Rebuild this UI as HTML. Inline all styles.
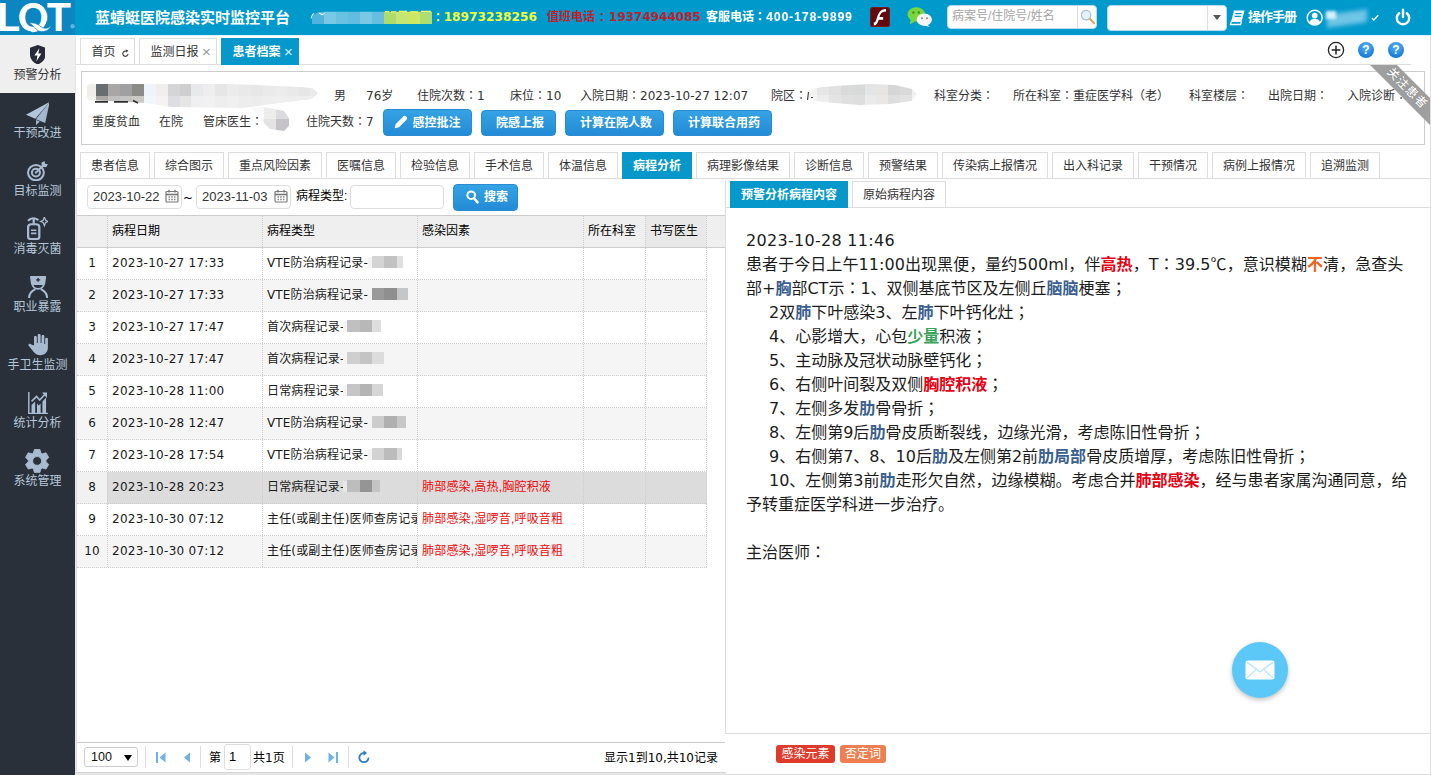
<!DOCTYPE html>
<html>
<head>
<meta charset="utf-8">
<title>蓝蜻蜓医院感染实时监控平台</title>
<style>
*{box-sizing:border-box;margin:0;padding:0}
html,body{width:1431px;height:775px;overflow:hidden;background:#fff}
body{position:relative;font-family:"DejaVu Sans","Liberation Sans","Noto Sans CJK SC",sans-serif;font-size:13px;color:#333}
.abs{position:absolute}
.cjk{font-family:"Liberation Sans","Noto Sans CJK SC",sans-serif}
.dj{font-family:"DejaVu Sans","Liberation Sans",sans-serif}
.fw{font-family:"Noto Sans CJK JP","Noto Sans CJK SC",sans-serif;line-height:0}
#txt b,#txt .cjk{line-height:0}
/* header */
#hdr{position:absolute;left:0;top:0;width:1431px;height:35px;background:#0099cc;color:#fff}
#logo{position:absolute;left:0;top:0;width:75px;height:35px;background:#0b86c0;overflow:hidden}
.ht{position:absolute;top:0;height:35px;line-height:34px;white-space:nowrap;font-weight:bold}
/* sidebar */
#side{position:absolute;left:0;top:35px;width:75px;height:740px;background:#2a3039}
.sit{position:absolute;left:0;width:75px;height:58px;text-align:center;color:#b4c7da;font-size:12px}
.sit.on{background:#efefef;color:#333}
.sit svg{position:absolute}
.sit b{position:absolute;left:0;width:75px;top:31px;line-height:18px;font-weight:normal;font-family:"Liberation Sans","Noto Sans CJK SC",sans-serif}
/* tabs */
.tab{position:absolute;height:26px;border:1px solid #ddd;border-bottom:0;background:#fff;color:#333;font-size:12px;line-height:27px;text-align:center;white-space:nowrap;font-family:"Liberation Sans","Noto Sans CJK SC",sans-serif;overflow:hidden}
.tab.on{background:#0698cb;border-color:#0698cb;color:#fff;font-weight:bold;height:27px}
.hl{position:absolute;height:1px;background:#ddd}
.pt{position:absolute;white-space:nowrap;font-size:12px;line-height:18px;color:#333}
.btn{position:absolute;height:27px;border-radius:4px;background:linear-gradient(#34a3e4,#248bd6);border:1px solid #2a8ad2;color:#fff;font-weight:bold;font-size:12px;line-height:26px;text-align:center;white-space:nowrap;padding-left:3px;font-family:"Liberation Sans","Noto Sans CJK SC",sans-serif}
.blur{position:absolute;filter:blur(2px)}
/* grid */
.gh{position:absolute;top:216px;height:31px;background:#efefef;font-size:12px;line-height:31px;white-space:nowrap;color:#000}
.row{position:absolute;left:77px;width:630px;height:32px;font-size:12px;line-height:31px;color:#1a1a1a}
.row.alt{background:#f5f5f5}
.row.sel{background:#dcdcdc}
.row span{position:absolute;top:0;white-space:nowrap;overflow:hidden;height:32px}
.row .n{left:0;width:30px;text-align:center}
.row .d{left:35px;letter-spacing:.27px}
.row .t{left:190px;width:150px;letter-spacing:.15px}
.row .f{left:345px;color:#f00a0a;letter-spacing:.2px;font-family:"Liberation Sans","Noto Sans CJK SC",sans-serif}
.dv{position:absolute;width:0;border-left:1px dotted #ccc}
.dh{position:absolute;height:0;border-top:1px dotted #ccc}
/* right content */
#txt{position:absolute;left:746px;top:229px;width:670px;font-size:16px;line-height:24px;color:#1c1c1c;white-space:nowrap}
#txt b.r{color:#e60012}#txt b.b{color:#3b5f8f}#txt b.g{color:#3aa35b}#txt b.o{color:#f0641e}
#txt b{font-family:"Liberation Sans","Noto Sans CJK SC",sans-serif}
.lab{position:absolute;top:745px;height:18px;border-radius:3px;color:#fff;font-size:12px;line-height:19px;text-align:center;font-family:"Liberation Sans","Noto Sans CJK SC",sans-serif}
#txt .ln{height:24px;line-height:24px;white-space:nowrap}
#txt .in{padding-left:23px}
#t1{letter-spacing:.3px}
#t2{letter-spacing:.07px}
</style>
</head>
<body>
<!-- HEADER -->
<div id="hdr">
  <div id="logo"><svg class="abs" style="left:0;top:0" width="75" height="35" viewBox="0 0 75 35"><clipPath id="qc"><rect x="0" y="0" width="19.3" height="35"/><ellipse cx="33.1" cy="17.3" rx="14.1" ry="14.9"/><rect x="47.4" y="0" width="28" height="35"/></clipPath><g clip-path="url(#qc)"><text x="-3 17.6 46.3" y="31.2" font-family="Liberation Sans, sans-serif" font-weight="bold" font-size="40.4" fill="#fff">LQT</text></g><path d="M28.6 23.2 C33 23.2 35 31.6 41.5 31.6 C46.5 31.6 49.8 29 51.2 25.4 C48 28.6 45 28.8 42.5 27.6 C39 26 36 21.6 28.6 23.2 Z" fill="#fff" stroke="#0b86c0" stroke-width="0.7"/><circle cx="72.6" cy="26.2" r="2.2" fill="#5fb4e2"/></svg></div>
  <div class="ht cjk" id="h_title" style="left:95px;font-size:15px;line-height:35px">蓝蜻蜓医院感染实时监控平台</div>
  <svg class="abs" style="left:308px;top:9px" width="126" height="17" viewBox="308 9 126 17"><clipPath id="mz0"><path d="M312 17 Q314 12.4 322 11.8 L432 11.8 L432 24 L312 24 Z"/></clipPath><g clip-path="url(#mz0)" shape-rendering="crispEdges"><rect x="311.8" y="11" width="12.1" height="13.2" fill="#4fb4dc"/><rect x="323.8" y="11" width="12.1" height="13.2" fill="#79c8e6"/><rect x="335.9" y="11" width="12.1" height="13.2" fill="#6bc1e2"/><rect x="347.9" y="11" width="12.1" height="13.2" fill="#62bde0"/><rect x="359.9" y="11" width="12.1" height="13.2" fill="#78c8e6"/><rect x="371.9" y="11" width="12.1" height="13.2" fill="#66bfe1"/><rect x="384.0" y="11" width="12.1" height="13.2" fill="#aedc6a"/><rect x="396.0" y="11" width="12.1" height="13.2" fill="#c6e674"/><rect x="408.0" y="11" width="12.1" height="13.2" fill="#cce765"/><rect x="420.1" y="11" width="12.1" height="13.2" fill="#aedd70"/></g><path d="M311 18.5 Q311.6 15.5 313.6 13.4 M319 13 L322 14.6 L324.5 13.6" stroke="#eaf7fd" stroke-width="1.1" fill="none"/><path d="M385 11.6 H389 M391 11.8 H396 M399 11.4 H407 M410 11.8 H418 M421 11.4 H431" stroke="#eef76a" stroke-width="1.2"/></svg>
  <div class="ht cjk" id="h_y" style="left:434px;font-size:12px;color:#f1ff38"><span class="fw" style="position:relative;left:-2px;top:1px">：</span><span class="dj" style="line-height:0;margin-left:-2.4px;font-size:12.2px">18973238256</span></div>
  <div class="ht cjk" id="h_r" style="left:547px;font-size:12px;color:#c21f2b">值班电话<span class="fw" style="margin-left:3px;position:relative;left:-2px;top:1px">：</span><span class="dj" style="line-height:0;margin-left:-1px">19374944085</span></div>
  <div class="ht cjk" id="h_w" style="left:706px;font-size:12px;color:#fff">客服电话<span class="fw">：</span><span style="letter-spacing:1px">400-178-9899</span></div>
  <svg class="abs" style="left:870px;top:7px" width="20" height="20" viewBox="0 0 21 21"><rect x="0" y="0" width="21" height="21" rx="3" fill="#7a1a1c"/><rect x="1" y="1" width="19" height="19" rx="2" fill="#620a0e"/><path d="M16.4 3.2 C11.4 3.2 10.4 6.4 9.6 8.8 L13.4 8.8 L13.4 11.8 L8.8 11.8 C7.8 14.8 6.8 17.6 3.6 17.8 L3.6 14.8 C5.4 14.6 5.8 12.8 6.6 10.4 C7.8 6.8 9.4 0.4 16.4 0.4 Z" fill="#fff" transform="translate(0.4,1.6)"/></svg>
  <svg class="abs" style="left:906.5px;top:7px" width="25.5" height="20" viewBox="0 0 28 22"><ellipse cx="10.2" cy="8.2" rx="9.6" ry="8" fill="#7ad63f"/><path d="M4 14 L3 19 L9 16 Z" fill="#7ad63f"/><circle cx="7" cy="6" r="1.3" fill="#3d8f1a"/><circle cx="13" cy="6" r="1.3" fill="#3d8f1a"/><ellipse cx="19" cy="14" rx="8.4" ry="6.8" fill="#f4f4f4"/><path d="M22 19 L25 22 L19 20.3 Z" fill="#f4f4f4"/><circle cx="16.4" cy="12.4" r="1.1" fill="#8a8a8a"/><circle cx="22" cy="12.4" r="1.1" fill="#8a8a8a"/></svg>
  <div class="abs" style="left:947px;top:5px;width:150px;height:24px;background:#fff;border-radius:4px;border:1px solid #b8dcee"></div>
  <div class="abs cjk" style="left:952px;top:5px;height:24px;line-height:23px;font-size:12px;color:#a5a5a5;white-space:nowrap">病案号/住院号/姓名</div>
  <div class="abs" style="left:1077px;top:6px;width:1px;height:22px;background:#ddd"></div>
  <svg class="abs" style="left:1080px;top:9px" width="16" height="16" viewBox="0 0 17 17"><circle cx="6.5" cy="6.5" r="5" fill="#e3f2fb" stroke="#a3c3da" stroke-width="1.3"/><path d="M10.5 10.5 L15 15" stroke="#dcae66" stroke-width="2.3" stroke-linecap="round"/></svg>
  <div class="abs" style="left:1107px;top:5px;width:120px;height:26px;background:#fff;border-radius:4px;border:1px solid #b8dcee"></div>
  <div class="abs" style="left:1207px;top:6px;width:1px;height:24px;background:#ddd"></div>
  <div class="abs" style="left:1212.5px;top:15px;width:0;height:0;border:4.5px solid transparent;border-top:5px solid #555;border-bottom:0"></div>
  <svg class="abs" style="left:1229px;top:9px" width="17" height="17" viewBox="0 0 17 17"><path d="M5 1.5 L15.5 1.5 L12.5 13 L2 13 Z" fill="#fff"/><path d="M2 13 L1.5 15.5 L11.5 15.5 L12.5 13" fill="none" stroke="#fff" stroke-width="1.3"/><path d="M6.3 4.6 L12.6 4.6 M5.6 7.3 L11.9 7.3" stroke="#0099cc" stroke-width="1.2"/></svg>
  <div class="ht cjk" id="h_m" style="left:1248px;font-size:13px;letter-spacing:-1px">操作手册</div>
  <svg class="abs" style="left:1306px;top:8.6px" width="17.4" height="17.4" viewBox="0 0 20 20"><circle cx="10" cy="10" r="8.6" fill="none" stroke="#fff" stroke-width="1.6"/><circle cx="10" cy="7.6" r="3.3" fill="#fff"/><path d="M3.8 16 C4.5 12.2 7 11.6 10 11.6 C13 11.6 15.5 12.2 16.2 16 C13 19 7 19 3.8 16 Z" fill="#fff"/></svg>
  <div class="blur" style="left:1327px;top:12px;width:40px;height:13px;background:#6fc5e5;filter:blur(2px);transform:skewY(-8deg)"></div><div class="blur" style="left:1326px;top:11px;width:10px;height:8px;background:#d8f0fa;filter:blur(1.5px)"></div>
  <svg class="abs" style="left:1370.5px;top:14px" width="8" height="7.2" viewBox="0 0 10 9"><path d="M1 5 L3.5 7.5 L9 1.5" fill="none" stroke="#fff" stroke-width="1.6"/></svg>
  <svg class="abs" style="left:1394px;top:8px" width="18" height="19" viewBox="0 0 18 19"><path d="M5.2 5.2 A6.2 6.2 0 1 0 12.8 5.2" fill="none" stroke="#fff" stroke-width="2.4" stroke-linecap="round"/><path d="M9 1.8 L9 9" stroke="#fff" stroke-width="2.4" stroke-linecap="round"/></svg>
</div>
<!-- SIDEBAR -->
<div id="side">
  <div class="sit on" style="top:0px"><svg viewBox="3 1.5 18 21.5" preserveAspectRatio="none" style="left:29.6px;top:9.7px;width:15.6px;height:19.5px"><path d="M12 1.5 L21 4.5 V12 C21 17.5 16.5 21.5 12 23 C7.5 21.5 3 17.5 3 12 V4.5 Z" fill="#272b38"/><path d="M13.8 5 L8 13 H11.6 L10.4 19.4 L16.2 10.8 H12.6 Z" fill="#fff"/></svg><b>预警分析</b></div>
  <div class="sit" style="top:58px"><svg viewBox="0 0 158 155" preserveAspectRatio="none" style="left:25.7px;top:8.7px;width:23.7px;height:23.2px"><path d="M158 0 L0 85 L62 112 Z" fill="#b3c5d9"/><path d="M158 0 L66 116 L128 141 Z" fill="#a3b6cd"/><path d="M67 121 L67 155 L92 131 Z" fill="#a3b6cd"/></svg><b>干预改进</b></div>
  <div class="sit" style="top:116px"><svg viewBox="0.8 0.5 22.7 22.7" preserveAspectRatio="none" style="left:27.0px;top:9.7px;width:20.9px;height:20.3px"><circle cx="10.5" cy="13.5" r="8.6" fill="none" stroke="#a9bbd1" stroke-width="2.2"/><circle cx="10.5" cy="13.5" r="4.4" fill="none" stroke="#a9bbd1" stroke-width="2.2"/><circle cx="10.5" cy="13.5" r="1.3" fill="#a9bbd1"/><path d="M10.5 13.5 L19 5" stroke="#a9bbd1" stroke-width="2.2"/><path d="M16.4 2.4 L17 7 L21.6 7.6 L23.5 4.2 L20.5 3.5 L19.8 0.5 Z" fill="#a9bbd1"/></svg><b>目标监测</b></div>
  <div class="sit" style="top:174px"><svg viewBox="5 1 19 22.6" preserveAspectRatio="none" style="left:26.6px;top:7.9px;width:21.3px;height:23.1px"><path d="M6 11 C6 9 7.5 8 9 8 H13 C14.5 8 16 9 16 11 V20 C16 21.6 15 22.6 13.5 22.6 H8.5 C7 22.6 6 21.6 6 20 Z" fill="none" stroke="#a9bbd1" stroke-width="2"/><path d="M11 8 V3.2 M6.5 4.2 C8.5 1.8 12 1.6 14.5 3.6" fill="none" stroke="#a9bbd1" stroke-width="2" stroke-linecap="round"/><path d="M8.6 14 H13.4 M8.6 17 H13.4" stroke="#a9bbd1" stroke-width="1.6"/><path d="M20.5 1 L21.6 4.2 L24 5.3 L21.6 6.4 L20.5 9.6 L19.4 6.4 L17 5.3 L19.4 4.2 Z" fill="none" stroke="#a9bbd1" stroke-width="1.1"/></svg><b>消毒灭菌</b></div>
  <div class="sit" style="top:232px"><svg viewBox="2 0.5 20 23.5" preserveAspectRatio="none" style="left:27.7px;top:8.7px;width:20.2px;height:22.0px"><path d="M5 1.5 H19 L18 9 H6 Z" fill="#a9bbd1" stroke="#a9bbd1" stroke-width="2" stroke-linejoin="round"/><path d="M12 2.6 V6.6 M10 4.6 H14" stroke="#2a3039" stroke-width="1.4"/><path d="M6.5 9 C6.5 16 17.5 16 17.5 9 Z" fill="#2a3039" stroke="#a9bbd1" stroke-width="2"/><path d="M3 24 C3.3 18.5 6.3 16 9.3 14.6 M14.7 14.6 C17.7 16 20.7 18.5 21 24" fill="none" stroke="#a9bbd1" stroke-width="2"/></svg><b>职业暴露</b></div>
  <div class="sit" style="top:290px"><svg viewBox="2 1.4 17.2 21.6" preserveAspectRatio="none" style="left:27.7px;top:9.4px;width:19.9px;height:21.2px"><path d="M7.2 13 V4.6 C7.2 3 9.6 3 9.6 4.6 V10.5 H10.4 V2.6 C10.4 1 12.9 1 12.9 2.6 V10.5 H13.7 V3.6 C13.7 2 16.1 2 16.1 3.6 V11.5 H16.9 V6.4 C16.9 4.8 19.2 4.8 19.2 6.4 V15.5 C19.2 20 16.5 23 12.8 23 C9.8 23 8.2 21.6 6.6 19.2 L2.6 13.4 C1.6 11.8 3.6 10.6 4.8 12 Z" fill="#a9bbd1"/></svg><b>手卫生监测</b></div>
  <div class="sit" style="top:348px"><svg viewBox="1.1 1 21.9 22.4" preserveAspectRatio="none" style="left:27.7px;top:9.0px;width:19.9px;height:22.4px"><path d="M2 1 V22.5 H23" fill="none" stroke="#a9bbd1" stroke-width="1.6"/><path d="M5 22 V14 L9 10.5 V22 Z M11 22 V12.5 L13 14.5 L15 12.5 V22 Z M17 22 V10.5 L21 6.5 V22 Z" fill="#a9bbd1"/><path d="M5 10.5 L10.5 5.5 L14 9 L20 3" fill="none" stroke="#a9bbd1" stroke-width="1.7"/><path d="M16.5 1.6 H22 V7.1 Z" fill="#a9bbd1"/></svg><b>统计分析</b></div>
  <div class="sit" style="top:406px"><svg viewBox="0 0.8 24 24" preserveAspectRatio="none" style="left:25.4px;top:7.9px;width:24.3px;height:23.9px"><path fill-rule="evenodd" stroke="#a9bbd1" stroke-width="0.8" stroke-linejoin="round" d="M8.28 4.82 L9.30 1.11 L14.70 1.11 L15.72 4.82 L17.05 5.59 L20.78 4.62 L23.48 9.29 L20.77 12.03 L20.77 13.57 L23.48 16.31 L20.78 20.98 L17.05 20.01 L15.72 20.78 L14.70 24.49 L9.30 24.49 L8.28 20.78 L6.95 20.01 L3.22 20.98 L0.52 16.31 L3.23 13.57 L3.23 12.03 L0.52 9.29 L3.22 4.62 L6.95 5.59 Z M12 8.4 A4.4 4.4 0 1 0 12 17.2 A4.4 4.4 0 1 0 12 8.4 Z" fill="#a9bbd1"/></svg><b>系统管理</b></div>
</div>
<div class="abs" style="left:75px;top:36px;width:1px;height:739px;background:#e6e6e6"></div>
<div class="abs" style="left:76px;top:178px;width:1px;height:597px;background:#ddd"></div>
<div class="abs" style="left:0;top:35px;width:1431px;height:1px;background:#e3f6ff"></div>
<div class="abs" style="left:1430px;top:36px;width:1px;height:739px;background:#ddd"></div>
<!-- MAIN -->
<div id="main">
<div class="hl" style="left:76px;top:64px;width:1335px"></div>
<div class="tab" style="left:80px;top:38px;width:55px;text-align:left;padding-left:10.5px">首页<svg style="margin-left:6px;vertical-align:-1px" width="7" height="8" viewBox="0 0 7 8"><path d="M6 5 A2.6 2.6 0 1 1 4.2 2.2" fill="none" stroke="#444" stroke-width="1.2"/><path d="M3.6 0.2 L6.4 1.6 L4.4 3.8 Z" fill="#444"/></svg></div>
<div class="tab" style="left:139px;top:38px;width:78px;text-align:left;padding-left:10.5px">监测日报<span style="color:#999;margin-left:3.5px;font-size:15px;line-height:0;position:relative;top:1px">×</span></div>
<div class="tab on" style="left:221px;top:38px;width:78px;text-align:left;padding-left:10.5px">患者档案<span style="color:#d6effa;font-weight:normal;margin-left:3.5px;font-size:15px;line-height:0;position:relative;top:1px">×</span></div>
<svg class="abs" style="left:1327px;top:41px" width="18" height="18" viewBox="0 0 18 18"><circle cx="9" cy="9" r="7.6" fill="#fff" stroke="#222" stroke-width="1.3"/><path d="M9 4.6 V13.4 M4.6 9 H13.4" stroke="#222" stroke-width="1.5"/></svg>
<div class="abs" style="left:1358px;top:42px;width:16px;height:16px;border-radius:50%;background:radial-gradient(circle at 50% 30%,#5db2f5,#1a7fdc 70%);color:#fff;font:bold 12px/16px 'Liberation Sans',sans-serif;text-align:center">?</div>
<div class="abs" style="left:1388px;top:42px;width:16px;height:16px;border-radius:50%;background:radial-gradient(circle at 50% 30%,#5db2f5,#1a7fdc 70%);color:#fff;font:bold 12px/16px 'Liberation Sans',sans-serif;text-align:center">?</div>
<div class="abs" style="left:81px;top:71px;width:1344px;height:74px;border:1px solid #ccc;background:#fff"></div>
<svg class="abs" style="left:84px;top:82px" width="240" height="30" viewBox="84 82 240 30"><clipPath id="mz1"><path d="M87 86 Q88 84 92 84 L230 84 L300 87 L312 88 L318 93 L312 99 L272 104 L242 108 L172 107 L146 103 L90 100 Q87 99 87 96 Z"/></clipPath><g clip-path="url(#mz1)" shape-rendering="crispEdges"><rect x="86.0" y="84.0" width="10.2" height="12.0" fill="#f0eeea"/><rect x="86.0" y="96.0" width="10.2" height="12.0" fill="#f3f1ee"/><rect x="96.2" y="84.0" width="11.9" height="12.0" fill="#6a6d70"/><rect x="96.2" y="96.0" width="11.9" height="12.0" fill="#aaa9a7"/><rect x="108.1" y="84.0" width="11.9" height="12.0" fill="#a8a7a5"/><rect x="108.1" y="96.0" width="11.9" height="12.0" fill="#c0bfbd"/><rect x="120.0" y="84.0" width="11.9" height="12.0" fill="#a0a0a3"/><rect x="120.0" y="96.0" width="11.9" height="12.0" fill="#c4c4c4"/><rect x="131.9" y="84.0" width="11.9" height="12.0" fill="#8b8c88"/><rect x="131.9" y="96.0" width="11.9" height="12.0" fill="#cbcac6"/><rect x="143.8" y="84.0" width="11.9" height="12.0" fill="#eef4f9"/><rect x="143.8" y="96.0" width="11.9" height="12.0" fill="#f2f7fb"/><rect x="155.7" y="84.0" width="11.9" height="12.0" fill="#f0efed"/><rect x="155.7" y="96.0" width="11.9" height="12.0" fill="#f4f3f1"/><rect x="167.6" y="84.0" width="11.9" height="12.0" fill="#d5d5d8"/><rect x="167.6" y="96.0" width="11.9" height="12.0" fill="#dddde2"/><rect x="179.5" y="84.0" width="11.9" height="12.0" fill="#cecece"/><rect x="179.5" y="96.0" width="11.9" height="12.0" fill="#e6e6e6"/><rect x="191.4" y="84.0" width="11.9" height="12.0" fill="#e8e9eb"/><rect x="191.4" y="96.0" width="11.9" height="12.0" fill="#f0f0f2"/><rect x="203.3" y="84.0" width="11.9" height="12.0" fill="#eeeeee"/><rect x="203.3" y="96.0" width="11.9" height="12.0" fill="#f1f1f1"/><rect x="215.2" y="84.0" width="11.9" height="12.0" fill="#e6e6e6"/><rect x="215.2" y="96.0" width="11.9" height="12.0" fill="#eeeeee"/><rect x="227.1" y="84.0" width="11.9" height="12.0" fill="#ececec"/><rect x="227.1" y="96.0" width="11.9" height="12.0" fill="#f0f0f0"/><rect x="239.0" y="84.0" width="11.9" height="12.0" fill="#e9e9e9"/><rect x="239.0" y="96.0" width="11.9" height="12.0" fill="#ededed"/><rect x="250.9" y="84.0" width="11.9" height="12.0" fill="#e7e7e7"/><rect x="250.9" y="96.0" width="11.9" height="12.0" fill="#ececec"/><rect x="262.8" y="84.0" width="11.9" height="12.0" fill="#eaeaea"/><rect x="262.8" y="96.0" width="11.9" height="12.0" fill="#eeeeee"/><rect x="274.7" y="84.0" width="11.9" height="12.0" fill="#ebebeb"/><rect x="274.7" y="96.0" width="11.9" height="12.0" fill="#efefef"/><rect x="286.6" y="84.0" width="11.9" height="12.0" fill="#e9e9e9"/><rect x="286.6" y="96.0" width="11.9" height="12.0" fill="#eeeeee"/><rect x="298.5" y="84.0" width="11.9" height="12.0" fill="#e6e6e6"/><rect x="298.5" y="96.0" width="11.9" height="12.0" fill="#ededed"/><rect x="310.4" y="84.0" width="11.9" height="12.0" fill="#eaeaea"/><rect x="310.4" y="96.0" width="11.9" height="12.0" fill="#efefef"/></g><path d="M95 101.8 H108 M114 101.8 H128 M133 100.5 L138 103" stroke="#2f2f2f" stroke-width="1.8" fill="none"/></svg>
<svg class="abs" style="left:804px;top:80px" width="116" height="30" viewBox="804 80 116 30"><clipPath id="mz3"><path d="M808 90 L822 87 L850 85 L870 84 L895 85 L912 89 L917 94 L912 101 L890 104 L860 105 L835 103 L815 101 L808 98 Z"/></clipPath><g clip-path="url(#mz3)" shape-rendering="crispEdges"><rect x="805.0" y="82.0" width="11.9" height="13.0" fill="#f2f2f2"/><rect x="805.0" y="95.0" width="11.9" height="12.0" fill="#f4f4f4"/><rect x="816.9" y="82.0" width="11.9" height="13.0" fill="#e6e6e6"/><rect x="816.9" y="95.0" width="11.9" height="12.0" fill="#ededed"/><rect x="828.8" y="82.0" width="11.9" height="13.0" fill="#e0e0e0"/><rect x="828.8" y="95.0" width="11.9" height="12.0" fill="#e4e4e4"/><rect x="840.7" y="82.0" width="11.9" height="13.0" fill="#dadada"/><rect x="840.7" y="95.0" width="11.9" height="12.0" fill="#e0e0e0"/><rect x="852.6" y="82.0" width="11.9" height="13.0" fill="#d8d9d9"/><rect x="852.6" y="95.0" width="11.9" height="12.0" fill="#dedede"/><rect x="864.5" y="82.0" width="11.9" height="13.0" fill="#e4e5e6"/><rect x="864.5" y="95.0" width="11.9" height="12.0" fill="#eaeaea"/><rect x="876.4" y="82.0" width="11.9" height="13.0" fill="#e6e5e3"/><rect x="876.4" y="95.0" width="11.9" height="12.0" fill="#e9e8e6"/><rect x="888.3" y="82.0" width="11.9" height="13.0" fill="#d6d6d6"/><rect x="888.3" y="95.0" width="11.9" height="12.0" fill="#dedede"/><rect x="900.2" y="82.0" width="11.9" height="13.0" fill="#d9d9d9"/><rect x="900.2" y="95.0" width="11.9" height="12.0" fill="#e2e2e2"/><rect x="912.1" y="82.0" width="11.9" height="13.0" fill="#f0f0f0"/><rect x="912.1" y="95.0" width="11.9" height="12.0" fill="#f4f4f4"/></g><path d="M808.5 92 L807.5 100 M811 97.5 H813" stroke="#444" stroke-width="1.2" fill="none"/></svg>
<div class="pt" id="p1_0" style="left:334px;top:87px">男</div>
<div class="pt" id="p1_1" style="left:366px;top:87px">76岁</div>
<div class="pt" id="p1_2" style="left:417px;top:87px">住院次数<span class="fw">：</span>1</div>
<div class="pt" id="p1_3" style="left:510px;top:87px">床位<span class="fw">：</span>10</div>
<div class="pt" id="p1_4" style="left:580px;top:87px">入院日期<span class="fw">：</span>2023-10-27 12:07</div>
<div class="pt" id="p1_5" style="left:771px;top:87px">院区<span class="fw">：</span></div>
<div class="pt" id="p1_6" style="left:934px;top:87px">科室分类<span class="fw">：</span></div>
<div class="pt" id="p1_7" style="left:1013px;top:87px">所在科室<span class="fw">：</span>重症医学科（老）</div>
<div class="pt" id="p1_8" style="left:1189px;top:87px">科室楼层<span class="fw">：</span></div>
<div class="pt" id="p1_9" style="left:1268px;top:87px">出院日期<span class="fw">：</span></div>
<div class="pt" id="p1_10" style="left:1347px;top:87px">入院诊断<span class="fw">：</span></div>
<div class="pt" id="p2_0" style="left:92px;top:113px">重度贫血</div>
<div class="pt" id="p2_1" style="left:159px;top:113px">在院</div>
<div class="pt" id="p2_2" style="left:203px;top:113px">管床医生<span class="fw">：</span></div>
<div class="pt" id="p2_3" style="left:306px;top:113px">住院天数<span class="fw">：</span>7</div>
<svg class="abs" style="left:248px;top:104px" width="44" height="30" viewBox="248 104 44 30"><clipPath id="mz2"><path d="M250 106 L264 107 L284 111 L289 118 L289 126 L284 131 L270 129 L262 121 Z"/></clipPath><g clip-path="url(#mz2)" shape-rendering="crispEdges"><rect x="250.0" y="107.0" width="14.0" height="12.0" fill="#f9f9f9"/><rect x="264.0" y="107.0" width="12.0" height="12.0" fill="#ededec"/><rect x="276.0" y="107.0" width="14.0" height="12.0" fill="#dcdcde"/><rect x="250.0" y="119.0" width="14.0" height="13.0" fill="#f4f4f4"/><rect x="264.0" y="119.0" width="12.0" height="13.0" fill="#e4e3e3"/><rect x="276.0" y="119.0" width="14.0" height="13.0" fill="#c5c3c8"/></g></svg>
<div class="btn" style="left:383px;top:109px;width:89px;padding-left:0"><svg style="vertical-align:-2px;margin-right:4px" width="14" height="14" viewBox="0 0 13 13"><path d="M0.6 12.4 L1.6 8.4 L8.6 1.4 C9.4 0.6 10.4 0.6 11.2 1.4 L11.6 1.8 C12.4 2.6 12.4 3.6 11.6 4.4 L4.6 11.4 Z" fill="#fff"/></svg>感控批注</div>
<div class="btn" style="left:481px;top:110px;width:75px;height:26px;line-height:24px">院感上报</div>
<div class="btn" style="left:565px;top:110px;width:99px;height:26px;line-height:24px">计算在院人数</div>
<div class="btn" style="left:673px;top:110px;width:99px;height:26px;line-height:24px">计算联合用药</div>
<div class="abs" style="left:1365px;top:65px;width:65px;height:66px;overflow:hidden"><div class="cjk" style="position:absolute;left:-8.5px;top:14px;width:100px;height:19px;background:#9f9f9f;color:#fff;font-size:12px;line-height:18px;font-weight:500;text-align:center;transform:rotate(45deg);letter-spacing:1px;text-shadow:0 0 1px #555">关注患者</div></div>
<div class="hl" style="left:76px;top:178px;width:1355px"></div>
<div class="tab" style="left:80px;top:152px;width:70px">患者信息</div>
<div class="tab" style="left:154px;top:152px;width:70px">综合图示</div>
<div class="tab" style="left:228px;top:152px;width:94px">重点风险因素</div>
<div class="tab" style="left:326px;top:152px;width:70px">医嘱信息</div>
<div class="tab" style="left:400px;top:152px;width:70px">检验信息</div>
<div class="tab" style="left:474px;top:152px;width:70px">手术信息</div>
<div class="tab" style="left:548px;top:152px;width:70px">体温信息</div>
<div class="tab on" style="left:622px;top:152px;width:70px">病程分析</div>
<div class="tab" style="left:696px;top:152px;width:94px">病理影像结果</div>
<div class="tab" style="left:794px;top:152px;width:70px">诊断信息</div>
<div class="tab" style="left:868px;top:152px;width:70px">预警结果</div>
<div class="tab" style="left:942px;top:152px;width:106px">传染病上报情况</div>
<div class="tab" style="left:1052px;top:152px;width:82px">出入科记录</div>
<div class="tab" style="left:1138px;top:152px;width:70px">干预情况</div>
<div class="tab" style="left:1212px;top:152px;width:94px">病例上报情况</div>
<div class="tab" style="left:1310px;top:152px;width:70px">追溯监测</div>
</div>
<div id="left">
<div class="abs" style="left:87px;top:185px;width:95px;height:24px;border:1px solid #ddd;border-radius:4px;background:#fff"></div><div class="abs cjk" style="left:93px;top:185px;height:24px;line-height:23px;font-size:13px;color:#333;white-space:nowrap">2023-10-22</div><svg class="abs" style="left:165px;top:189px" width="14" height="14" viewBox="0 0 14 14"><rect x="1" y="2.5" width="12" height="10.5" rx="1" fill="#fff" stroke="#777" stroke-width="1.2"/><path d="M1 5.5 H13" stroke="#777" stroke-width="1.6"/><path d="M4 0.8 V3.4 M10 0.8 V3.4" stroke="#777" stroke-width="1.4"/><path d="M3.5 8 H5 M6.2 8 H7.8 M9 8 H10.5 M3.5 10.5 H5 M6.2 10.5 H7.8 M9 10.5 H10.5" stroke="#888" stroke-width="1.3"/></svg>
<div class="abs" style="left:183px;top:187px;line-height:22px;font-size:12px;color:#000">~</div>
<div class="abs" style="left:196px;top:185px;width:95px;height:24px;border:1px solid #ddd;border-radius:4px;background:#fff"></div><div class="abs cjk" style="left:202px;top:185px;height:24px;line-height:23px;font-size:13px;color:#333;white-space:nowrap">2023-11-03</div><svg class="abs" style="left:274px;top:189px" width="14" height="14" viewBox="0 0 14 14"><rect x="1" y="2.5" width="12" height="10.5" rx="1" fill="#fff" stroke="#777" stroke-width="1.2"/><path d="M1 5.5 H13" stroke="#777" stroke-width="1.6"/><path d="M4 0.8 V3.4 M10 0.8 V3.4" stroke="#777" stroke-width="1.4"/><path d="M3.5 8 H5 M6.2 8 H7.8 M9 8 H10.5 M3.5 10.5 H5 M6.2 10.5 H7.8 M9 10.5 H10.5" stroke="#888" stroke-width="1.3"/></svg>
<div class="abs cjk" style="left:296px;top:185px;line-height:23px;font-size:12px;color:#000;white-space:nowrap">病程类型:</div>
<div class="abs" style="left:350px;top:185px;width:94px;height:24px;border:1px solid #ddd;border-radius:4px;background:#fff"></div>
<div class="btn" style="left:453px;top:184px;width:65px;height:27px;line-height:25px"><svg style="vertical-align:-3px;margin-right:5px" width="13" height="14" viewBox="0 0 13 14"><circle cx="5.2" cy="5.2" r="3.8" fill="none" stroke="#fff" stroke-width="2"/><path d="M8 8.2 L11.6 12.4" stroke="#fff" stroke-width="2.4" stroke-linecap="round"/></svg>搜索</div>
<div class="abs" style="left:77px;top:215px;width:648px;height:1px;background:#ccc"></div>
<div class="gh" style="left:77px;width:648px"></div>
<div class="abs" style="left:77px;top:247px;width:648px;height:1px;background:#ccc"></div>
<div class="gh cjk" style="left:107px;width:155px;padding-left:5px;background:transparent">病程日期</div>
<div class="gh cjk" style="left:262px;width:155px;padding-left:5px;background:transparent">病程类型</div>
<div class="gh cjk" style="left:417px;width:167px;padding-left:5px;background:transparent">感染因素</div>
<div class="gh cjk" style="left:583px;width:62px;padding-left:5px;background:transparent">所在科室</div>
<div class="gh cjk" style="left:645px;width:61px;padding-left:5px;background:#e8e8e8">书写医生</div>
<div class="row" style="top:248px"><span class="n">1</span><span class="d">2023-10-27 17:33</span><span class="t">VTE防治病程记录-</span><span class="f"></span></div>
<svg class="abs" style="left:368px;top:254px;filter:blur(.4px)" width="50" height="16" viewBox="0 0 50 16" shape-rendering="crispEdges"><rect x="0.0" y="3" width="4" height="11" fill="#f4f4f4"/><rect x="4.0" y="2" width="12.3" height="12" fill="#d4d4d4"/><rect x="16.3" y="2" width="12.3" height="12" fill="#c2c2c2"/><rect x="28.6" y="2" width="6.4" height="12" fill="#e0e0e0"/></svg>
<div class="row alt" style="top:280px"><span class="n">2</span><span class="d">2023-10-27 17:33</span><span class="t">VTE防治病程记录-</span><span class="f"></span></div>
<svg class="abs" style="left:368px;top:286px;filter:blur(.4px)" width="50" height="16" viewBox="0 0 50 16" shape-rendering="crispEdges"><rect x="0.0" y="3" width="4" height="11" fill="#f4f4f4"/><rect x="4.0" y="2" width="12.3" height="12" fill="#9a9a9a"/><rect x="16.3" y="2" width="12.3" height="12" fill="#8f8f8f"/><rect x="28.6" y="2" width="11.4" height="12" fill="#c4c6c8"/></svg>
<div class="row" style="top:312px"><span class="n">3</span><span class="d">2023-10-27 17:47</span><span class="t">首次病程记录-</span><span class="f"></span></div>
<svg class="abs" style="left:343px;top:318px;filter:blur(.4px)" width="50" height="16" viewBox="0 0 50 16" shape-rendering="crispEdges"><rect x="0.3" y="3" width="4" height="11" fill="#f4f4f4"/><rect x="4.3" y="2" width="12.3" height="12" fill="#c0c0c0"/><rect x="16.6" y="2" width="12.3" height="12" fill="#b8b8b8"/><rect x="28.9" y="2" width="9.1" height="12" fill="#dedede"/></svg>
<div class="row alt" style="top:344px"><span class="n">4</span><span class="d">2023-10-27 17:47</span><span class="t">首次病程记录-</span><span class="f"></span></div>
<svg class="abs" style="left:343px;top:350px;filter:blur(.4px)" width="50" height="16" viewBox="0 0 50 16" shape-rendering="crispEdges"><rect x="0.3" y="3" width="4" height="11" fill="#f4f4f4"/><rect x="4.3" y="2" width="12.3" height="12" fill="#cfcfcf"/><rect x="16.6" y="2" width="12.3" height="12" fill="#c4c4c4"/><rect x="28.9" y="2" width="12.1" height="12" fill="#dcdcdc"/></svg>
<div class="row" style="top:376px"><span class="n">5</span><span class="d">2023-10-28 11:00</span><span class="t">日常病程记录-</span><span class="f"></span></div>
<svg class="abs" style="left:343px;top:382px;filter:blur(.4px)" width="50" height="16" viewBox="0 0 50 16" shape-rendering="crispEdges"><rect x="0.3" y="3" width="4" height="11" fill="#f4f4f4"/><rect x="4.3" y="2" width="12.3" height="12" fill="#c6c6c6"/><rect x="16.6" y="2" width="12.3" height="12" fill="#b4b4b4"/><rect x="28.9" y="2" width="11.1" height="12" fill="#d6d6d6"/></svg>
<div class="row alt" style="top:408px"><span class="n">6</span><span class="d">2023-10-28 12:47</span><span class="t">VTE防治病程记录-</span><span class="f"></span></div>
<svg class="abs" style="left:368px;top:414px;filter:blur(.4px)" width="50" height="16" viewBox="0 0 50 16" shape-rendering="crispEdges"><rect x="0.0" y="3" width="4" height="11" fill="#f4f4f4"/><rect x="4.0" y="2" width="12.3" height="12" fill="#cccccc"/><rect x="16.3" y="2" width="12.3" height="12" fill="#b0b0b0"/><rect x="28.6" y="2" width="9.4" height="12" fill="#c8c8c8"/></svg>
<div class="row" style="top:440px"><span class="n">7</span><span class="d">2023-10-28 17:54</span><span class="t">VTE防治病程记录-</span><span class="f"></span></div>
<svg class="abs" style="left:368px;top:446px;filter:blur(.4px)" width="50" height="16" viewBox="0 0 50 16" shape-rendering="crispEdges"><rect x="0.0" y="3" width="4" height="11" fill="#f4f4f4"/><rect x="4.0" y="2" width="12.3" height="12" fill="#d2d2d2"/><rect x="16.3" y="2" width="12.3" height="12" fill="#bcbcbc"/><rect x="28.6" y="2" width="5.4" height="12" fill="#dadada"/></svg>
<div class="row sel" style="top:472px"><span class="n" style="background:#f1f1f1">8</span><span class="d">2023-10-28 20:23</span><span class="t">日常病程记录-</span><span class="f">肺部感染,高热,胸腔积液</span></div>
<svg class="abs" style="left:343px;top:478px;filter:blur(.4px)" width="50" height="16" viewBox="0 0 50 16" shape-rendering="crispEdges"><rect x="0.3" y="3" width="4" height="11" fill="#e8e8e8"/><rect x="4.3" y="2" width="12.3" height="12" fill="#bdbdbd"/><rect x="16.6" y="2" width="12.3" height="12" fill="#959595"/><rect x="28.9" y="2" width="8.1" height="12" fill="#c4c4c4"/></svg>
<div class="row" style="top:504px"><span class="n">9</span><span class="d">2023-10-30 07:12</span><span class="t">主任(或副主任)医师查房记录</span><span class="f">肺部感染,湿啰音,呼吸音粗</span></div>
<div class="row alt" style="top:536px"><span class="n">10</span><span class="d">2023-10-30 07:12</span><span class="t">主任(或副主任)医师查房记录</span><span class="f">肺部感染,湿啰音,呼吸音粗</span></div>
<div class="dv" style="left:107px;top:215px;height:352px"></div>
<div class="dv" style="left:262px;top:215px;height:352px"></div>
<div class="dv" style="left:417px;top:215px;height:352px"></div>
<div class="dv" style="left:583px;top:215px;height:352px"></div>
<div class="dv" style="left:645px;top:215px;height:352px"></div>
<div class="dv" style="left:706px;top:215px;height:352px"></div>
<div class="dh" style="left:77px;top:279px;width:630px"></div>
<div class="dh" style="left:77px;top:311px;width:630px"></div>
<div class="dh" style="left:77px;top:343px;width:630px"></div>
<div class="dh" style="left:77px;top:375px;width:630px"></div>
<div class="dh" style="left:77px;top:407px;width:630px"></div>
<div class="dh" style="left:77px;top:439px;width:630px"></div>
<div class="dh" style="left:77px;top:471px;width:630px"></div>
<div class="dh" style="left:77px;top:503px;width:630px"></div>
<div class="dh" style="left:77px;top:535px;width:630px"></div>
<div class="dh" style="left:77px;top:567px;width:630px"></div>
<div class="abs" style="left:77px;top:742px;width:648px;height:1px;background:#ccc"></div>
<div class="abs" style="left:76px;top:772px;width:650px;height:3px;background:#e6e6e6;border-top:1px solid #d4d4d4"></div>
<div class="abs" style="left:84px;top:747px;width:54px;height:20px;border:1px solid #ccc;border-radius:3px;background:#fff;font-size:12.5px;line-height:18px;padding-left:6px;color:#111;font-family:'Liberation Sans',sans-serif">100<i style="position:absolute;right:5px;top:7px;border:4px solid transparent;border-top:6px solid #000;border-bottom:0"></i></div>
<div class="abs" style="left:145px;top:746px;width:1px;height:22px;background:#ddd"></div>
<div class="abs" style="left:200px;top:746px;width:1px;height:22px;background:#ddd"></div>
<div class="abs" style="left:292px;top:746px;width:1px;height:22px;background:#ddd"></div>
<div class="abs" style="left:348px;top:746px;width:1px;height:22px;background:#ddd"></div>
<svg class="abs" style="left:155px;top:751px" width="12" height="13" viewBox="0 0 12 13"><path d="M2 1 V12" stroke="#6fb2ea" stroke-width="2"/><path d="M10.5 1.5 L4.5 6.5 L10.5 11.5 Z" fill="#6fb2ea"/></svg>
<svg class="abs" style="left:182px;top:751px" width="9" height="13" viewBox="0 0 9 13"><path d="M8 1.5 L2 6.5 L8 11.5 Z" fill="#6fb2ea"/></svg>
<div class="abs cjk" style="left:209px;top:749px;font-size:12px;line-height:18px;color:#000">第</div>
<div class="abs" style="left:224px;top:744px;width:27px;height:26px;border:1px solid #ddd;border-radius:3px;background:#fff;font-size:13px;line-height:24px;padding-left:4px;color:#000;font-family:'Liberation Sans',sans-serif">1</div>
<div class="abs" style="left:253px;top:749px;font-size:12px;line-height:18px;color:#000;white-space:nowrap">共1页</div>
<svg class="abs" style="left:304px;top:751px" width="9" height="13" viewBox="0 0 9 13"><path d="M1 1.5 L7 6.5 L1 11.5 Z" fill="#6fb2ea"/></svg>
<svg class="abs" style="left:327px;top:751px" width="12" height="13" viewBox="0 0 12 13"><path d="M10 1 V12" stroke="#6fb2ea" stroke-width="2"/><path d="M1.5 1.5 L7.5 6.5 L1.5 11.5 Z" fill="#6fb2ea"/></svg>
<svg class="abs" style="left:357px;top:750px" width="14" height="14" viewBox="0 0 14 14"><path d="M11.5 7.5 A4.6 4.6 0 1 1 7 3" fill="none" stroke="#2d7fc4" stroke-width="1.8"/><path d="M6.5 0.3 L10 3 L6.5 5.8 Z" fill="#2d7fc4"/></svg>
<div class="abs" id="pinfo" style="left:604px;top:749px;font-size:12px;line-height:18px;color:#000;white-space:nowrap">显示1到10,共10记录</div>
</div>
<div id="right">
<div class="abs" style="left:725px;top:180px;width:706px;height:554px;border:1px solid #ddd;border-top:0;background:#fff"></div>
<div class="hl" style="left:726px;top:207px;width:705px"></div>
<div class="tab on" style="left:730px;top:181px;width:118px">预警分析病程内容</div>
<div class="tab" style="left:852px;top:181px;width:94px">原始病程内容</div>
<div id="txt">
<div class="ln"><span id="t1">2023-10-28 11:46</span></div>
<div class="ln"><span id="t2">患者于今日上午11:00出现黑便，量约500ml，伴<b class="r">高热</b>，T<span class="fw">：</span>39.5<span class="cjk">℃</span>，意识模糊<b class="o">不</b>清，急查头</span></div>
<div class="ln"><span id="t3">部+<b class="b">胸</b>部CT示<span class="fw">：</span>1、双侧基底节区及左侧丘<b class="b">脑脑</b>梗塞<span class="fw">；</span></span></div>
<div class="ln in"><span id="t4">2双<b class="b">肺</b>下叶感染3、左<b class="b">肺</b>下叶钙化灶<span class="fw">；</span></span></div>
<div class="ln in"><span id="t5">4、心影增大，心包<b class="g">少量</b>积液<span class="fw">；</span></span></div>
<div class="ln in"><span id="t6">5、主动脉及冠状动脉壁钙化<span class="fw">；</span></span></div>
<div class="ln in"><span id="t7">6、右侧叶间裂及双侧<b class="r">胸腔积液</b><span class="fw">；</span></span></div>
<div class="ln in"><span id="t8">7、左侧多发<b class="b">肋</b>骨骨折<span class="fw">；</span></span></div>
<div class="ln in"><span id="t9">8、左侧第9后<b class="b">肋</b>骨皮质断裂线，边缘光滑，考虑陈旧性骨折<span class="fw">；</span></span></div>
<div class="ln in"><span id="t10">9、右侧第7、8、10后<b class="b">肋</b>及左侧第2前<b class="b">肋局部</b>骨皮质增厚，考虑陈旧性骨折<span class="fw">；</span></span></div>
<div class="ln in"><span id="t11">10、左侧第3前<b class="b">肋</b>走形欠自然，边缘模糊。考虑合并<b class="r">肺部感染</b>，经与患者家属沟通同意，给</span></div>
<div class="ln"><span id="t12">予转重症医学科进一步治疗。</span></div>
<div class="ln"></div>
<div class="ln"><span id="t13">主治医师<span class="fw">：</span></span></div>
</div>
<div class="lab" style="left:776px;width:59px;background:#e03a2b">感染元素</div>
<div class="lab" style="left:840px;width:46px;background:#ee7f50">否定词</div>
<div class="abs" style="left:726px;top:774px;width:705px;height:1px;background:#ddd"></div>
<div class="abs" style="left:1232px;top:642px;width:56px;height:56px;border-radius:50%;background:#5bc8f7;box-shadow:0 2px 5px rgba(0,0,0,.25)"><svg style="position:absolute;left:13px;top:18px" width="30" height="20" viewBox="0 0 30 22" preserveAspectRatio="none"><rect x="0.5" y="0.5" width="29" height="21" rx="2.5" fill="#fff"/><path d="M2 2.5 L15 13 L28 2.5" fill="none" stroke="#bfe6f7" stroke-width="1.6"/><path d="M2 20 L11 10.5 M28 20 L19 10.5" stroke="#bfe6f7" stroke-width="1.4"/></svg></div>
</div>
</body>
</html>
